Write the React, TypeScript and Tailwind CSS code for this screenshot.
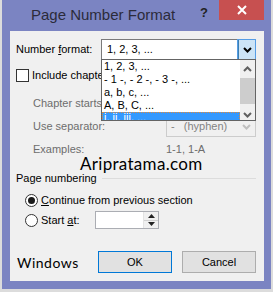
import React from 'react';

const ui = "font-['Liberation_Sans',Arial,sans-serif] text-[11px]";

function Chevron({ color = '#000', w = 9 }: { color?: string; w?: number }) {
  return (
    <svg width={w} height={6} viewBox="0 0 9 6">
      <path d="M1 1l3.5 3.5L8 1" fill="none" stroke={color} strokeWidth="2" />
    </svg>
  );
}

export default function App() {
  const formats = ['1, 2, 3, ...', '- 1 -, - 2 -, - 3 -, ...', 'a, b, c, ...', 'A, B, C, ...', 'i, ii, iii, ...'];

  return (
    <div className="w-[273px] h-[292px] bg-[#dcdcdc] pl-[2px] pr-[2px] pb-[3px]">
      <div className="flex h-full flex-col bg-[#7b84c2]">
        {/* Title bar */}
        <div className="flex h-[31px] items-start">
          <span className="ml-[29px] mt-[6px] font-['Liberation_Sans',Arial,sans-serif] text-[15px] leading-[18px] text-[#2b2b3a]">
            Page Number Format
          </span>
          <span className="ml-auto mt-[5px] font-['Liberation_Sans',Arial,sans-serif] text-[13px] font-bold leading-[15px] text-[#222]">
            ?
          </span>
          <div className="ml-[11px] mr-[7px] flex h-[20px] w-[45px] items-center justify-center bg-[#c75050]">
            <svg width="10" height="10" viewBox="0 0 10 10">
              <path d="M1 1l8 8M9 1l-8 8" stroke="#fff" strokeWidth="2" />
            </svg>
          </div>
        </div>

        {/* Content */}
        <div className={`relative ml-[8px] mr-[7px] h-[250px] bg-[#f0f0f0] pt-[8px] text-[#000] ${ui}`}>
          {/* Number format */}
          <div className="flex h-[21px] items-center">
            <span className="ml-[6px] w-[85px]">
              Number <span className="underline">f</span>ormat:
            </span>
            <div className="flex h-[21px] w-[155px] items-center border border-[#7a7a7a] bg-white">
              <span className="ml-[5px] flex-1">1, 2, 3, ...</span>
              <div className="flex h-full w-[17px] items-center justify-center border-l border-[#3c7fb1] bg-[#cce4f7] outline outline-1 outline-[#569de5]">
                <Chevron />
              </div>
            </div>
          </div>

          {/* Include chapter */}
          <div className="mt-[9px] flex h-[13px] items-center">
            <div className="ml-[6px] h-[13px] w-[13px] border border-[#333] bg-white" />
            <span className="ml-[3px]">Include chapter number</span>
          </div>

          <div className="mt-[13px] flex h-[16px] items-center text-[#6d6d6d]">
            <span className="ml-[23px] w-[133px]">Chapter starts with style:</span>
            <span>Heading 1</span>
          </div>

          <div className="mt-[5px] flex h-[21px] items-center text-[#6d6d6d]">
            <span className="ml-[23px] w-[133px]">Use separator:</span>
            <div className="flex h-[21px] w-[90px] items-center border border-[#cccccc] bg-[#f0f0f0] text-[#838383]">
              <span className="ml-[4px] flex-1">-&nbsp;&nbsp;&nbsp;(hyphen)</span>
              <div className="flex h-full w-[17px] items-center justify-center">
                <Chevron color="#bfbfbf" />
              </div>
            </div>
          </div>

          <div className="mt-[4px] flex h-[16px] items-center text-[#6d6d6d]">
            <span className="ml-[23px] w-[133px]">Examples:</span>
            <span>1-1, 1-A</span>
          </div>

          <div className="flex h-[14px] items-center">
            <span className="ml-[70px] font-['Lato',sans-serif] text-[17px] leading-[14px] tracking-[0.3px]">
              Aripratama.com
            </span>
          </div>

          <div className="flex h-[14px] items-center">
            <span className="ml-[6px]">Page numbering</span>
            <div className="ml-[5px] mr-[8px] h-px flex-1 bg-[#dcdcdc]" />
          </div>

          <div className="mt-[7px] flex h-[16px] items-center">
            <div className="ml-[15px] flex h-[13px] w-[13px] items-center justify-center rounded-full border border-[#333] bg-white">
              <div className="h-[7px] w-[7px] rounded-full bg-[#1a1a1a]" />
            </div>
            <span className="ml-[3px]">
              <span className="underline">C</span>ontinue from previous section
            </span>
          </div>

          <div className="mt-[3px] flex h-[18px] items-center">
            <div className="ml-[15px] h-[13px] w-[13px] rounded-full border border-[#333] bg-white" />
            <span className="ml-[3px] w-[54px]">
              Start <span className="underline">a</span>t:
            </span>
            <div className="flex h-[18px] w-[64px] border border-[#abadb3] bg-white">
              <div className="flex-1" />
              <div className="flex w-[15px] flex-col border-l border-[#e3e3e3] bg-[#f0f0f0]">
                <div className="flex flex-1 items-center justify-center border-b border-[#d0d0d0]">
                  <svg width="7" height="4" viewBox="0 0 7 4"><path d="M0 4L3.5 0 7 4z" fill="#222" /></svg>
                </div>
                <div className="flex flex-1 items-center justify-center">
                  <svg width="7" height="4" viewBox="0 0 7 4"><path d="M0 0l3.5 4L7 0z" fill="#222" /></svg>
                </div>
              </div>
            </div>
          </div>

          <div className="mt-[22px] flex h-[22px] items-center">
            <span className="ml-[7px] w-[81px] font-['Lato',sans-serif] text-[14px] tracking-[0.5px]">Windows</span>
            <div className="flex h-[22px] w-[74px] items-center justify-center border border-[#0078d7] bg-[#e1e1e1]">OK</div>
            <div className="ml-[10px] flex h-[22px] w-[74px] items-center justify-center border border-[#adadad] bg-[#e1e1e1]">
              Cancel
            </div>
          </div>

          {/* Open dropdown list */}
          <div className="absolute left-[91px] top-[28px] z-10 flex h-[62px] w-[155px] overflow-hidden border border-[#646464] bg-white">
            <div className="flex-1">
              {formats.map((f, i) => (
                <div
                  key={f}
                  className={
                    i === 4
                      ? 'h-[13px] border border-dotted border-[#e08a3c] bg-[#3399ff] pl-[1px] leading-[8px] text-white'
                      : 'h-[13px] pl-[2px] leading-[13px]'
                  }
                >
                  {f}
                </div>
              ))}
            </div>
            <div className="flex w-[15px] flex-col items-center bg-[#f0f0f0]">
              <div className="mt-[4px] flex h-[10px] items-center rotate-180">
                <Chevron color="#606060" />
              </div>
              <div className="mt-[4px] h-[26px] w-[15px] bg-[#cdcdcd]" />
              <div className="mt-[6px] flex h-[10px] items-center">
                <Chevron color="#606060" />
              </div>
            </div>
          </div>
        </div>
      </div>
    </div>
  );
}
